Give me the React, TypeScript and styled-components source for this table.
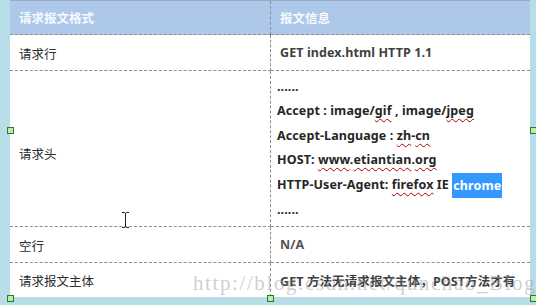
import React from "react";
import styled, { createGlobalStyle } from "styled-components";

const GlobalStyle = createGlobalStyle`
  html, body {
    margin: 0;
    padding: 0;
    background: #b7dde8;
  }
`;

const Page = styled.div`
  position: relative;
  width: 536px;
  height: 305px;
  box-sizing: border-box;
  padding: 0 6px 9px 10px;
  background: #b7dde8;
  overflow: hidden;
  font-family: "Noto Sans", "Noto Sans CJK SC", sans-serif;
`;

const Sheet = styled.div`
  display: grid;
  grid-template-columns: 261px 259px;
  grid-template-rows: 34px 36px 156px 36px 34px;
  background: #fff;
  border-top: 1px solid #98aac4;
  box-sizing: border-box;
`;

type CellProps = {
  $head?: boolean;
  $left?: boolean;
  $last?: boolean;
};

const Cell = styled.div<CellProps>`
  box-sizing: border-box;
  display: flex;
  align-items: center;
  padding-left: 9px;
  background: ${(p) => (p.$head ? "#adc8e8" : "#fff")};
  border-bottom: ${(p) => (p.$last ? "none" : "1px dashed #8e8e8e")};
  border-right: ${(p) => (p.$left ? "1px dashed #8e8e8e" : "none")};
  font-size: 12.5px;
`;

const HeadText = styled.span`
  color: #f6f9fd;
  font-weight: bold;
`;

type LabelProps = {
  $drop?: number;
};

const Label = styled.span<LabelProps>`
  color: #2e2e2e;
  padding-top: ${(p) => p.$drop ?? 1}px;
`;

type ValueProps = {
  $tone?: string;
};

const Value = styled.span<ValueProps>`
  color: ${(p) => p.$tone || "#404040"};
  font-weight: bold;
  letter-spacing: 0.1px;
`;

const Lines = styled.div`
  display: flex;
  flex-direction: column;
  margin-left: -3px;
  color: #262626;
  font-weight: bold;
  line-height: 24.5px;
  letter-spacing: 0.1px;
`;

const Squiggle = styled.span`
  text-decoration: underline wavy #b00000;
  text-decoration-thickness: 1px;
  text-underline-offset: 3px;
`;

const Picked = styled.span`
  display: inline-block;
  height: 25px;
  line-height: 25px;
  vertical-align: top;
  background: #3399ff;
  color: #fff;
  padding: 0 1px;
`;

type HandleProps = {
  $x: number;
  $y: number;
};

const Handle = styled.span<HandleProps>`
  position: absolute;
  left: ${(p) => p.$x}px;
  top: ${(p) => p.$y}px;
  width: 5px;
  height: 5px;
  border: 1px solid #2c7a2c;
  background: #b6efaa;
`;

const Watermark = styled.div`
  position: absolute;
  left: 193px;
  top: 271px;
  font-family: "Liberation Serif", "DejaVu Serif", serif;
  font-size: 21px;
  letter-spacing: 1.6px;
  color: rgba(160, 160, 160, 0.5);
  white-space: nowrap;
  pointer-events: none;
`;

const Caret = styled.svg`
  position: absolute;
  left: 121px;
  top: 212px;
`;

export default function App() {
  return (
    <>
      <GlobalStyle />
      <Page>
        <Sheet>
          <Cell $head $left>
            <HeadText>请求报文格式</HeadText>
          </Cell>
          <Cell $head>
            <HeadText>报文信息</HeadText>
          </Cell>

          <Cell $left>
            <Label>请求行</Label>
          </Cell>
          <Cell>
            <Value>GET index.html HTTP 1.1</Value>
          </Cell>

          <Cell $left>
            <Label $drop={10}>请求头</Label>
          </Cell>
          <Cell>
            <Lines>
              <span>......</span>
              <span>
                Accept : image/<Squiggle>gif</Squiggle> , image/
                <Squiggle>jpeg</Squiggle>
              </span>
              <span>
                Accept-Language : <Squiggle>zh</Squiggle>-
                <Squiggle>cn</Squiggle>
              </span>
              <span>
                HOST: <Squiggle>www</Squiggle>.<Squiggle>etiantian</Squiggle>.
                <Squiggle>org</Squiggle>
              </span>
              <span>
                HTTP-User-Agent: <Squiggle>firefox</Squiggle> IE{" "}
                <Picked>chrome</Picked>
              </span>
              <span>......</span>
            </Lines>
          </Cell>

          <Cell $left>
            <Label>空行</Label>
          </Cell>
          <Cell>
            <Value $tone="#555">N/A</Value>
          </Cell>

          <Cell $left $last>
            <Label>请求报文主体</Label>
          </Cell>
          <Cell $last>
            <Value>GET 方法无请求报文主体，POST方法才有</Value>
          </Cell>
        </Sheet>

        <Watermark>http://blog.csdn.net/qunchao_Blog</Watermark>

        <Caret width="9" height="16" viewBox="0 0 9 16">
          <path
            d="M1 0.5h2.5M5.5 0.5h2.5M4.5 1v14M1 15.5h2.5M5.5 15.5h2.5M3.5 0.5l1 0.8 1-0.8M3.5 15.5l1-0.8 1 0.8"
            stroke="#222"
            strokeWidth="1"
            fill="none"
          />
        </Caret>

        <Handle $x={7} $y={127} />
        <Handle $x={530} $y={127} />
        <Handle $x={7} $y={295} />
        <Handle $x={267} $y={295} />
        <Handle $x={530} $y={295} />
      </Page>
    </>
  );
}
